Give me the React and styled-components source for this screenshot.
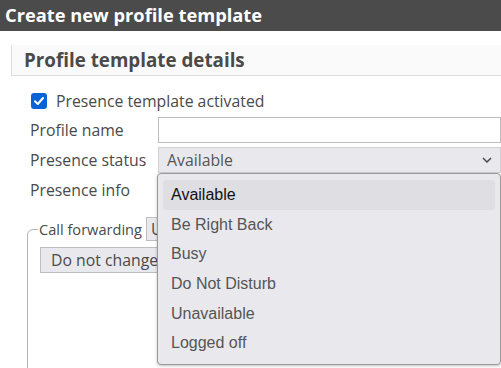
import React, { useState } from "react";
import styled, { createGlobalStyle } from "styled-components";

const STATUSES = [
  "Available",
  "Be Right Back",
  "Busy",
  "Do Not Disturb",
  "Unavailable",
  "Logged off"
];

const UI_FONT = `"Open Sans", "Noto Sans", sans-serif`;

const GlobalStyle = createGlobalStyle`
  html, body {
    margin: 0;
    height: 100%;
    overflow: hidden;
    background: #fff;
  }
  body {
    font-family: ${UI_FONT};
    color: #4a4a4a;
  }
`;

const Page = styled.div`
  width: 501px;
  height: 368px;
  overflow: hidden;
`;

const TitleBar = styled.h1`
  margin: 0;
  height: 31px;
  padding-left: 5px;
  background: #4b4b4b;
  color: #fff;
  font-size: 18.3px;
  font-weight: 700;
  line-height: 30px;
  white-space: nowrap;
`;

const Body = styled.div`
  padding: 14px 0 0 11px;
`;

const SectionHeader = styled.h2`
  margin: 0;
  height: 30px;
  padding-left: 12px;
  background: #fafafa;
  border-left: 1px solid #dcdcdc;
  border-bottom: 1px solid #dcdcdc;
  color: #4a4a4a;
  font-size: 18.8px;
  font-weight: 700;
  line-height: 30px;
`;

const Form = styled.div`
  padding: 16px 0 0 19px;
`;

const CheckRow = styled.label`
  display: flex;
  align-items: center;
  gap: 9px;
  height: 18px;
  font-size: 15.8px;
  margin-bottom: 5px;
`;

const CheckBox = styled.span`
  display: grid;
  place-items: center;
  width: 16px;
  height: 16px;
  margin-left: 1px;
  border-radius: 3px;
  background: #0b62d6;
`;

const Row = styled.div`
  display: grid;
  grid-template-columns: 128px 1fr;
  align-items: center;
  height: 30px;
`;

const Label = styled.span`
  font-size: 15.8px;
  white-space: nowrap;
`;

const TextInput = styled.div`
  height: 24px;
  border: 1px solid #bdbdbd;
  background: #fff;
`;

const SelectWrap = styled.div`
  position: relative;
`;

const SelectBox = styled.div`
  display: flex;
  align-items: center;
  justify-content: space-between;
  height: 24px;
  padding: 0 8px 0 8px;
  border: 1px solid #cfcfd4;
  background: #e9e9ed;
  color: #555;
  font-size: 15.8px;
`;

const Menu = styled.ul`
  position: absolute;
  z-index: 5;
  top: 100%;
  left: -1px;
  width: 332px;
  margin: 0;
  padding: 6px 5px 6px;
  list-style: none;
  background: #e9e9ed;
  border: 1px solid #9a9a9a;
  border-radius: 4px;
  box-shadow: 0 1px 3px rgba(0, 0, 0, 0.25);
`;

const Option = styled.li`
  height: 29.7px;
  padding-left: 8px;
  border-radius: 3px;
  background: ${p => (p.$active ? "#dedee3" : "transparent")};
  color: ${p => (p.$active ? "#111" : "#555")};
  font-family: "Liberation Sans", Arial, sans-serif;
  font-size: 16px;
  line-height: 29px;
`;

const Fieldset = styled.fieldset`
  margin: 12px -20px 0 -3px;
  padding: 6px 12px 0;
  height: 160px;
  border: 1px solid #b5b5b5;
  border-radius: 6px 0 0 0;
`;

const Legend = styled.legend`
  display: flex;
  align-items: center;
  gap: 4px;
  margin-left: -2px;
  padding: 0 0 0 1px;
  font-size: 14.6px;
`;

const MiniSelect = styled.div`
  width: 150px;
  height: 22px;
  border: 1px solid #bdbdbd;
  background: #e9e9ed;
  font-size: 15.8px;
  line-height: 22px;
  padding-left: 4px;
  overflow: hidden;
  white-space: nowrap;
`;

const Button = styled.div`
  display: inline-block;
  height: 24px;
  padding: 0 10px;
  border: 1px solid #bdbdbd;
  background: #e9e9ed;
  color: #4a4a4a;
  font-size: 15.8px;
  line-height: 24px;
`;

const Check = () => (
  <svg width="12" height="12" viewBox="0 0 12 12">
    <path d="M2 6.3 L4.8 9 L10 3" fill="none" stroke="#fff" strokeWidth="2" strokeLinecap="round" strokeLinejoin="round" />
  </svg>
);

const Chevron = () => (
  <svg width="10" height="6" viewBox="0 0 10 6">
    <path d="M1 1 L5 5 L9 1" fill="none" stroke="#4a4a4a" strokeWidth="1.5" />
  </svg>
);

const App = () => {
  const [status, setStatus] = useState("Available");

  return (
    <Page>
      <GlobalStyle />
      <TitleBar>Create new profile template</TitleBar>
      <Body>
        <SectionHeader>Profile template details</SectionHeader>
        <Form>
          <CheckRow>
            <CheckBox>
              <Check />
            </CheckBox>
            Presence template activated
          </CheckRow>

          <Row>
            <Label>Profile name</Label>
            <TextInput />
          </Row>

          <Row>
            <Label>Presence status</Label>
            <SelectWrap>
              <SelectBox>
                {status}
                <Chevron />
              </SelectBox>
              <Menu>
                {STATUSES.map(s => (
                  <Option key={s} $active={s === status} onClick={() => setStatus(s)}>
                    {s}
                  </Option>
                ))}
              </Menu>
            </SelectWrap>
          </Row>

          <Row>
            <Label>Presence info</Label>
          </Row>

          <Fieldset>
            <Legend>
              Call forwarding
              <MiniSelect>Unconditional</MiniSelect>
            </Legend>
            <Button>Do not change</Button>
          </Fieldset>
        </Form>
      </Body>
    </Page>
  );
};

export default App;
